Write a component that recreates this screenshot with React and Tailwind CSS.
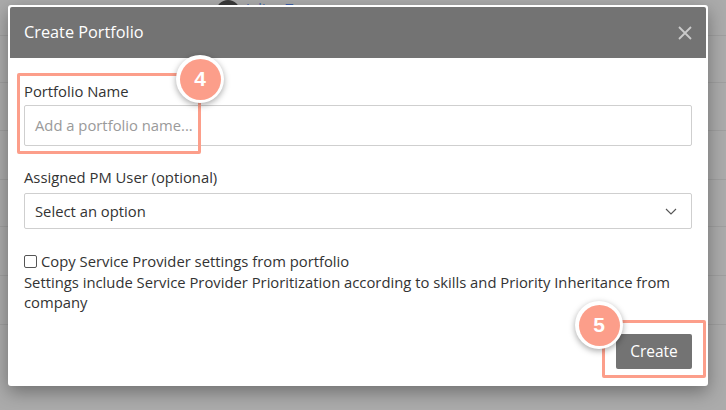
import React from 'react';

const Badge = ({ n }) => (
  <div className="w-[48px] h-[48px] rounded-full bg-white flex items-center justify-center shadow-[0_2px_6px_rgba(0,0,0,0.35)]">
    <div className="w-[41px] h-[41px] rounded-full bg-[#fc9e8a] flex items-center justify-center text-white text-[21px] font-semibold font-['Liberation_Sans',sans-serif]">
      {n}
    </div>
  </div>
);

const App = () => {
  return (
    <div className="relative w-[726px] h-[410px] overflow-hidden bg-[#ababab] font-['Open_Sans',sans-serif]">
      {/* page behind the overlay */}
      <div className="flex items-center gap-[6px] pl-[216px] h-[12px]">
        <div className="w-[24px] h-[24px] rounded-full bg-[#3a3a3a] mt-[12px]" />
        <span className="text-[14px] text-[#3b5fa8] mt-[4px]">Julian T.</span>
      </div>
      <div className="h-[24px] border-b border-[#9f9f9f]" />
      <div className="h-[47px] border-b border-[#9f9f9f]" />
      <div className="h-[48px] border-b border-[#9f9f9f]" />
      <div className="h-[49px] border-b border-[#9f9f9f]" />
      <div className="h-[47px] border-b border-[#9f9f9f]" />
      <div className="h-[49px] border-b border-[#9f9f9f]" />
      <div className="h-[49px] border-b border-[#9f9f9f]" />

      {/* modal */}
      <div className="absolute left-[8px] top-[5px] w-[700px] h-[381px] bg-white rounded-[3px] p-[2px] shadow-[0_6px_18px_rgba(0,0,0,0.35)] flex flex-col">
        <div className="h-[51px] bg-[#737373] rounded-t-[2px] flex items-center justify-between pl-[14px] pr-[14px]">
          <span className="text-white text-[16.3px]">Create Portfolio</span>
          <svg width="14" height="14" viewBox="0 0 14 14" className="mt-[1px]">
            <path d="M1 1L13 13M13 1L1 13" stroke="#cbcbcb" strokeWidth="1.8" />
          </svg>
        </div>

        <div className="px-[14px] pt-[23px] flex flex-col text-[14.8px] text-[#333]">
          <div className="relative">
            <label className="block leading-[20px]">Portfolio Name</label>
            <div className="mt-[4px] h-[41px] border border-[#cfcfcf] rounded-[2px] flex items-center px-[10px] text-[#9a9a9a]">
              Add a portfolio name...
            </div>
            {/* highlight 4 */}
            <div className="absolute left-[-7px] top-[-8px] w-[184px] h-[81px] border-[3px] border-[#fc9e8a] rounded-[2px]" />
            <div className="absolute left-[152px] top-[-26px]">
              <Badge n="4" />
            </div>
          </div>

          <label className="block leading-[20px] mt-[21px]">Assigned PM User (optional)</label>
          <div className="mt-[6px] h-[36px] border border-[#cfcfcf] rounded-[2px] flex items-center justify-between px-[10px] text-[#333]">
            <span>Select an option</span>
            <svg width="12" height="7" viewBox="0 0 12 7" className="mr-[4px]">
              <path d="M1 1L6 6L11 1" fill="none" stroke="#555" strokeWidth="1.1" />
            </svg>
          </div>

          <div className="mt-[22px] flex items-center gap-[4px] leading-[20px]">
            <span className="w-[13px] h-[13px] border border-[#555] rounded-[2px] bg-white" />
            <span>Copy Service Provider settings from portfolio</span>
          </div>
          <p className="leading-[20px] pr-[20px] mt-[1px]">
            Settings include Service Provider Prioritization according to skills and Priority Inheritance from company
          </p>

          <div className="flex justify-end mt-[22px]">
            <div className="relative">
              <button className="h-[35px] w-[76px] bg-[#737373] text-white text-[15.5px] rounded-[2px]">
                Create
              </button>
              <div className="absolute left-[-14px] top-[-14px] w-[104px] h-[58px] border-[3px] border-[#fc9e8a] rounded-[2px]" />
              <div className="absolute left-[-41px] top-[-33px]">
                <Badge n="5" />
              </div>
            </div>
          </div>
        </div>
      </div>
    </div>
  );
};

export default App;
